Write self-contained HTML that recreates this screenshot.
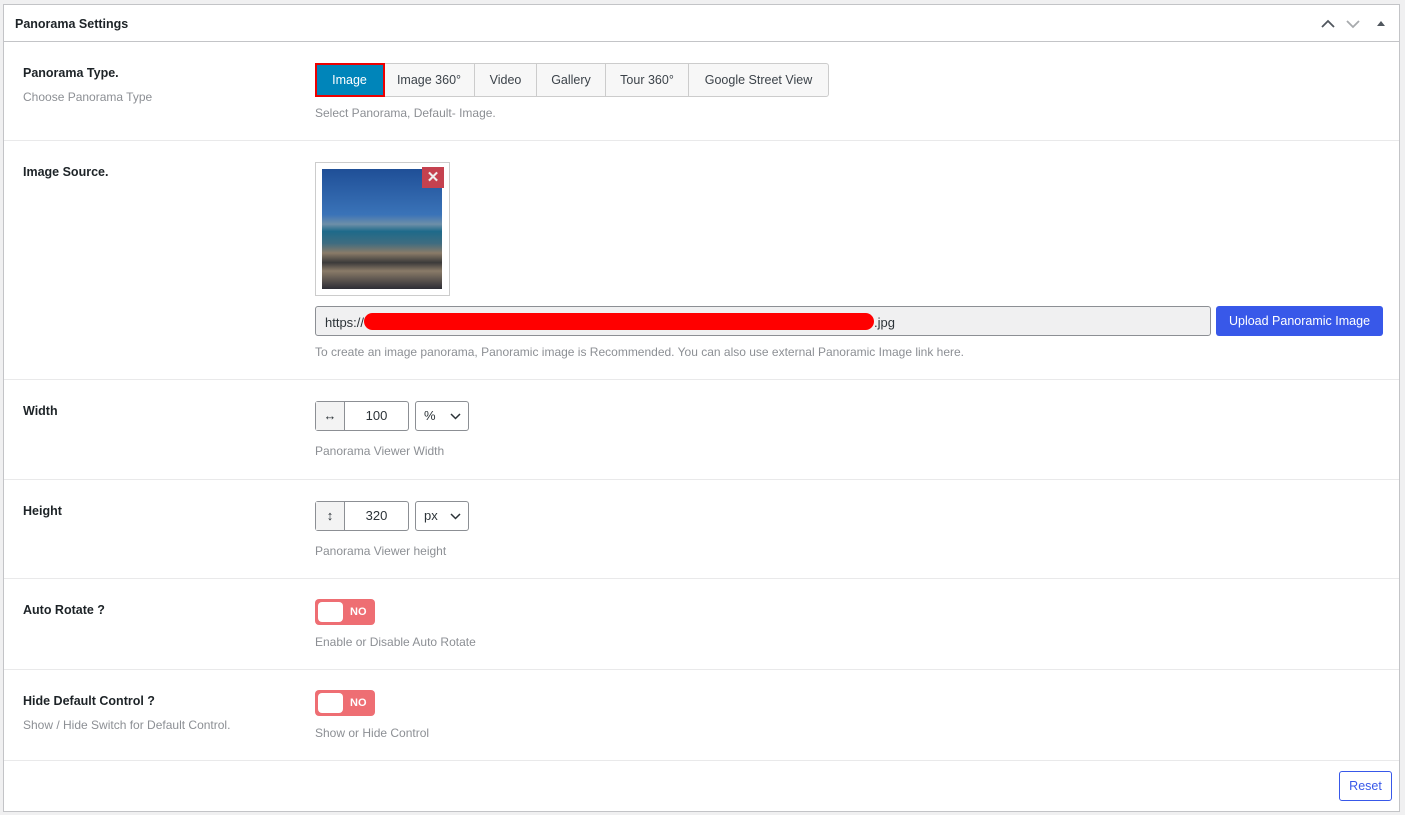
<!DOCTYPE html>
<html><head><style>
*{box-sizing:border-box;margin:0;padding:0}
body{width:1405px;height:815px;background:#f0f0f1;font-family:"Liberation Sans",sans-serif;position:relative;overflow:hidden;color:#1d2327}
.p{position:absolute;left:3px;top:4px;width:1397px;height:808px;background:#fff;border:1px solid #c3c4c7}
.a{position:absolute}
.hd{left:0;top:0;width:100%;height:37px;border-bottom:1px solid #c3c4c7}
.t{font-size:12.5px;font-weight:bold;color:#1d2327}
.d{font-size:12px;color:#8c8f94}
.sep{left:0;width:100%;height:1px;background:#e9e9ea}
.btns{left:311px;top:58px;height:34px;display:flex;border:1px solid #ccc;border-radius:3px;background:#f7f7f7}
.btns div{font-size:12.5px;color:#3c434a;text-align:center;line-height:32px;border-right:1px solid #ccc}
.btns div:last-child{border-right:0}
.btns .on{background:#0085ba;color:#fff;outline:2px solid #e00;outline-offset:-1px}
.inp{border:1px solid #8c8f94;border-radius:3px;background:#fff;font-size:13px;color:#2c3338}
.tg{width:60px;height:26px;background:#ee6e73;border-radius:4px}
.tg i{position:absolute;left:3px;top:3px;width:25px;height:20px;background:#fff;border-radius:4px}
.tg b{position:absolute;left:35px;top:7px;font-size:11px;color:#fff}
</style></head><body>
<div class="p">
<div class="a hd"><div class="a t" style="left:11px;top:12px">Panorama Settings</div>
<svg class="a" style="left:1316px;top:12px" width="70" height="14"><path d="M2 10 L8 4 L14 10" stroke="#50575e" stroke-width="1.8" fill="none"/><path d="M27 4 L33 10 L39 4" stroke="#a7aaad" stroke-width="1.8" fill="none"/><path d="M57 9 L61 4 L65 9Z" fill="#50575e"/></svg></div>

<div class="a t" style="left:19px;top:61px">Panorama Type.</div>
<div class="a d" style="left:19px;top:85px">Choose Panorama Type</div>
<div class="a btns"><div class="on" style="width:68px">Image</div><div style="width:91px">Image 360°</div><div style="width:62px">Video</div><div style="width:69px">Gallery</div><div style="width:83px">Tour 360°</div><div style="width:139px">Google Street View</div></div>
<div class="a d" style="left:311px;top:101px">Select Panorama, Default- Image.</div>
<div class="a sep" style="top:135px"></div>

<div class="a t" style="left:19px;top:160px">Image Source.</div>
<div class="a" style="left:311px;top:157px;width:135px;height:134px;border:1px solid #ccc;background:#fff">
<div class="a" style="left:6px;top:6px;width:120px;height:120px;background:linear-gradient(#1f4f97 0%,#3a73b8 38%,#6d8fa8 46%,#1e6a8a 52%,#3f6c80 62%,#8a7b68 70%,#3b3a3a 78%,#8a7b68 85%,#2d2d35 100%)"></div>
<div class="a" style="left:106px;top:4px;width:22px;height:21px;background:#c5414f;color:#eee;font-weight:bold;text-align:center;line-height:21px;font-size:15px">✕</div></div>
<div class="a inp" style="left:311px;top:301px;width:896px;height:30px;background:#f0f0f1;padding:6px 9px">https://<span style="display:inline-block;width:510px;height:17px;background:#f00;border-radius:9px;vertical-align:-3px"></span>.jpg</div>
<div class="a" style="left:1212px;top:301px;width:167px;height:30px;background:#3858e9;color:#fff;border-radius:3px;font-size:12.5px;text-align:center;line-height:30px">Upload Panoramic Image</div>
<div class="a d" style="left:311px;top:340px">To create an image panorama, Panoramic image is Recommended. You can also use external Panoramic Image link here.</div>
<div class="a sep" style="top:374px"></div>

<div class="a t" style="left:19px;top:399px">Width</div>
<div class="a inp" style="left:311px;top:396px;width:94px;height:30px"><div class="a" style="left:0;top:0;width:29px;height:28px;background:#f3f3f3;border-right:1px solid #8c8f94;text-align:center;line-height:27px;font-size:13px">↔</div><div class="a" style="left:29px;width:63px;text-align:center;line-height:28px">100</div></div>
<div class="a inp" style="left:411px;top:396px;width:54px;height:30px;padding:6px 8px">%<svg class="a" style="left:34px;top:11px" width="11" height="7"><path d="M1 1 L5.5 5.5 L10 1" stroke="#2c3338" stroke-width="1.5" fill="none"/></svg></div>
<div class="a d" style="left:311px;top:439px">Panorama Viewer Width</div>
<div class="a sep" style="top:474px"></div>

<div class="a t" style="left:19px;top:499px">Height</div>
<div class="a inp" style="left:311px;top:496px;width:94px;height:30px"><div class="a" style="left:0;top:0;width:29px;height:28px;background:#f3f3f3;border-right:1px solid #8c8f94;text-align:center;line-height:27px;font-size:13px">↕</div><div class="a" style="left:29px;width:63px;text-align:center;line-height:28px">320</div></div>
<div class="a inp" style="left:411px;top:496px;width:54px;height:30px;padding:6px 8px">px<svg class="a" style="left:34px;top:11px" width="11" height="7"><path d="M1 1 L5.5 5.5 L10 1" stroke="#2c3338" stroke-width="1.5" fill="none"/></svg></div>
<div class="a d" style="left:311px;top:539px">Panorama Viewer height</div>
<div class="a sep" style="top:573px"></div>

<div class="a t" style="left:19px;top:598px">Auto Rotate ?</div>
<div class="a tg" style="left:311px;top:594px"><i></i><b>NO</b></div>
<div class="a d" style="left:311px;top:630px">Enable or Disable Auto Rotate</div>
<div class="a sep" style="top:664px"></div>

<div class="a t" style="left:19px;top:689px">Hide Default Control ?</div>
<div class="a d" style="left:19px;top:713px">Show / Hide Switch for Default Control.</div>
<div class="a tg" style="left:311px;top:685px"><i></i><b>NO</b></div>
<div class="a d" style="left:311px;top:721px">Show or Hide Control</div>
<div class="a sep" style="top:755px"></div>

<div class="a" style="left:1335px;top:766px;width:53px;height:30px;border:1px solid #3858e9;border-radius:3px;color:#3858e9;font-size:12.5px;text-align:center;line-height:28px">Reset</div>
</div>
</body></html>
